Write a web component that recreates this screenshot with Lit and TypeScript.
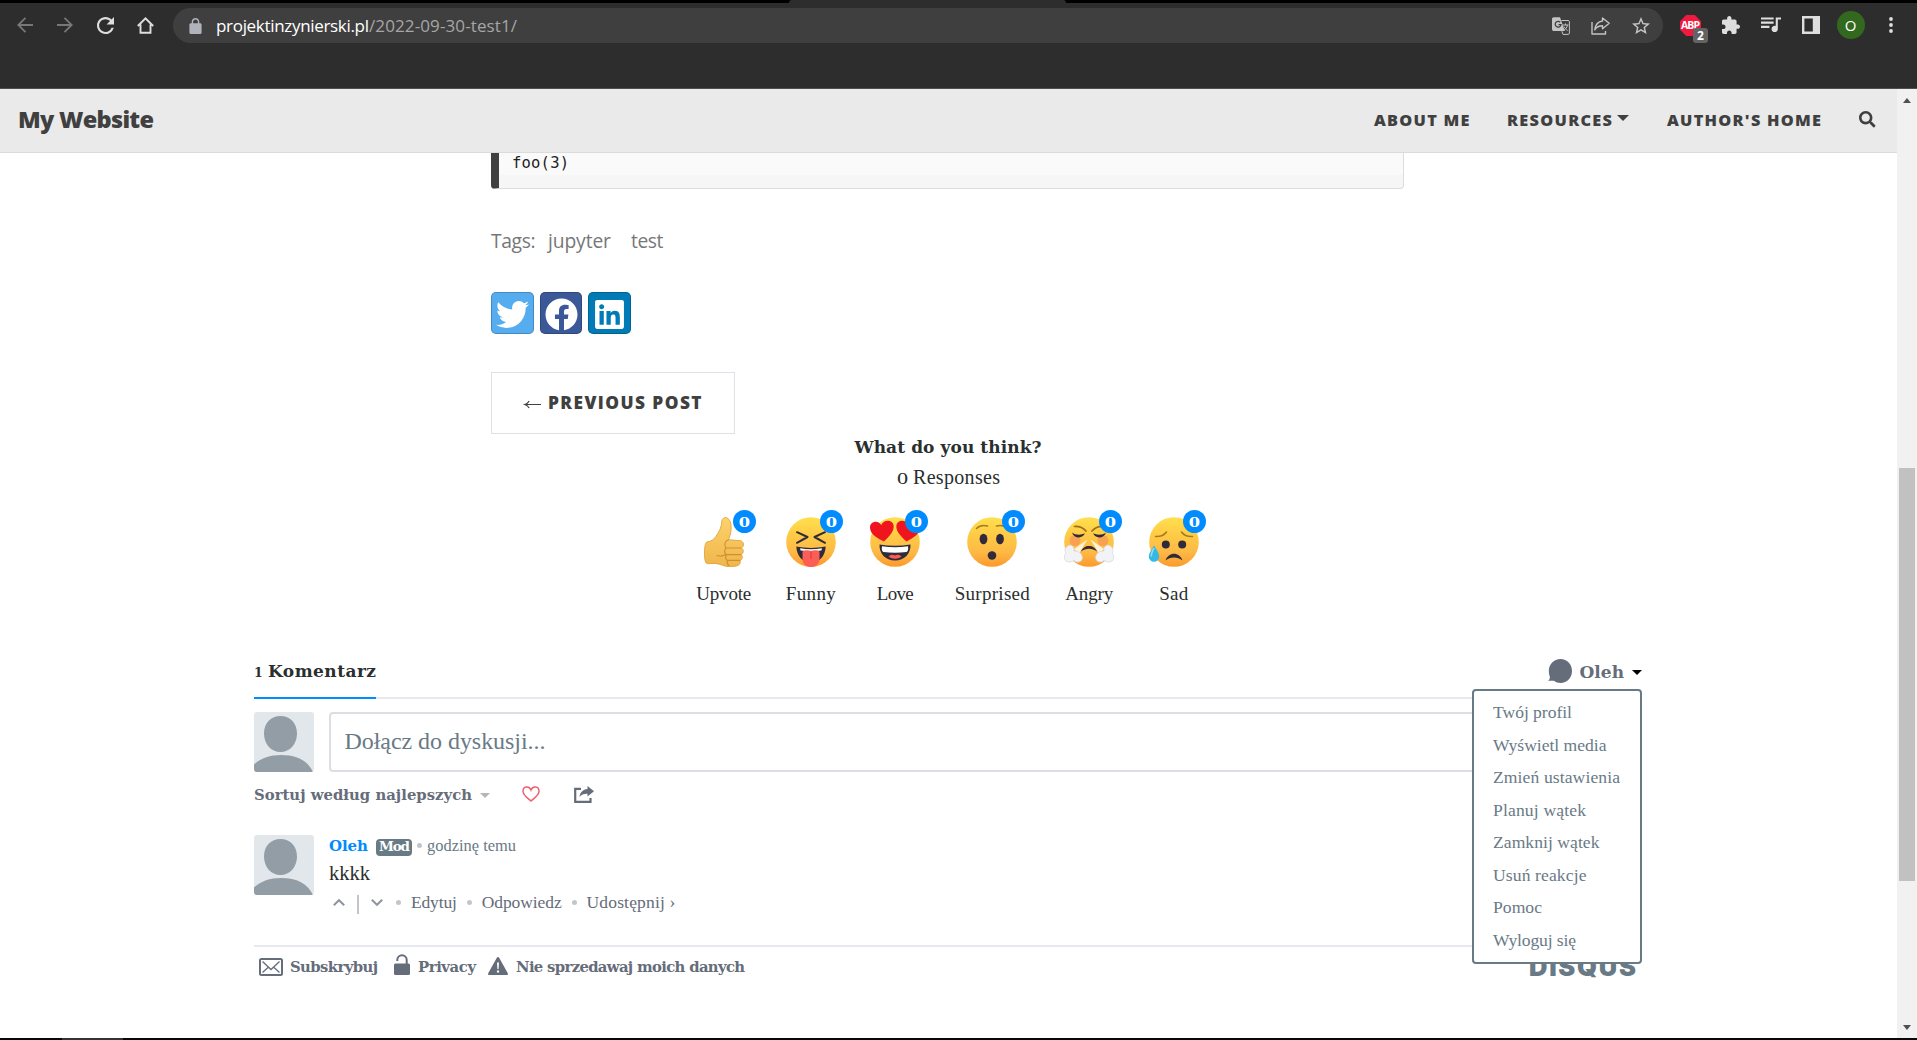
import { LitElement, html, css, svg } from "lit";
import { customElement, property } from "lit/decorators.js";
import { styleMap } from "lit/directives/style-map.js";

/** A single line of text, tracked so that it spans the given width. */
@customElement("fit-text")
class FitText extends LitElement {
  @property({ type: Number }) w = 0;
  @property() text = "";
  static styles = css`
    :host { display: inline-block; white-space: nowrap; flex: none; }
    .host { display: block; white-space: pre; }
    .line { display: inline-block; }
  `;
  firstUpdated() {
    this.fit();
    document.fonts.ready.then(() => this.fit());
  }
  fit() {
    const el = this.renderRoot.querySelector(".line") as HTMLElement;
    el.style.letterSpacing = "0px";
    const natural = el.getBoundingClientRect().width;
    const n = Array.from(this.text).length;
    el.style.letterSpacing = n > 1 ? `${(this.w - natural) / (n - 1)}px` : "0px";
  }
  render() {
    return html`<span class="host" style=${styleMap({ width: `${this.w}px` })}><span class="line">${this.text}</span></span>`;
  }
}

const t = (text: string, w: number, cls = "") => html`<fit-text class=${cls} .text=${text} .w=${w}></fit-text>`;

const gradient = (id: string) => svg`<defs><linearGradient id=${id} x1="0" y1="0" x2="0" y2="1">
  <stop offset="0" stop-color="#ffe04f"/><stop offset=".35" stop-color="#ffcb45"/><stop offset=".7" stop-color="#fdb946"/><stop offset="1" stop-color="#fc9a2b"/></linearGradient></defs>
  <circle cx="25" cy="25" r="24.8" fill="url(#${id})"/>`;

const faces: Record<string, unknown> = {
  upvote: svg`<defs><linearGradient id="th" x1="0" y1="0" x2="0" y2="1"><stop offset="0" stop-color="#fdd26b"/><stop offset="1" stop-color="#efb64c"/></linearGradient></defs>
    <g transform="translate(1.5 0)"><path d="M23 1.2c3-2 6.300 1 7.200 5 1.300 6-.2 11.500-2.200 16.500l12 1c3.500.8 4 5.500 1 7.300 2.600 1.500 2.300 5.500-.4 6.500 2 1.700 1.400 5-1 6 .8 2.500-.8 5-3.600 5.500-5 .8-11 .8-14-.8-4-2-11-2-15-1.500-2 0-3-4-3-9.500 0-6 .4-11.500 2.500-12.300 4-.3 7-2.500 9-5.500 2.500-4 4.500-7 5.300-11.200C21.300 5.500 21 2.500 23 1.200z" fill="url(#th)" stroke="#e0a33c" stroke-width=".9"/>
    <path d="M28 22.700c-3 .8-5 4.300-2.600 8.300-1.800 2.400-1.500 5 .6 6.800-1.200 2-.8 4.400.8 5.700-.4 2 .3 4.200 1.600 5M25.500 31h15M26.200 37.600h14M27.200 43.400h12M16.500 38.500c3 .8 6 .7 8.500-.7" fill="none" stroke="#cf8f30" stroke-width="1.100" stroke-linecap="round"/></g>`,
  funny: svg`${gradient("fu")}
    <path d="M11 15.200l10.500 4.800L11 25.800M39 15.200L28.500 20 39 25.800" fill="none" stroke="#302b3a" stroke-width="2" stroke-linecap="round" stroke-linejoin="round"/>
    <path d="M10.300 29.500c9 1.900 20.400 1.900 29.400 0-.5 9.500-6 16-14.700 16s-14.200-6.500-14.700-16z" fill="#302b3a"/>
    <path d="M14 31.300q11 1.700 22 0l-.6 2.200q-10.400 1.400-20.800 0z" fill="#fff"/>
    <path d="M16.500 34.500c2.500-1.600 6-1.800 8.500-.5 2.500-1.300 6-1.100 8.500.5v7.500c0 10.700-17 10.700-17 0z" fill="#fc5d55"/><path d="M25 34.500v7.500" stroke="#d83e41" stroke-width="1.200"/>`,
  love: svg`${gradient("lo")}
    <path d="M13.800 24.500C8 21.500 0 17.500 0 10.500 0 4 8.200 2.500 11.200 8 13.500 2.800 22.500 1.800 23.600 8.500c.9 6-5.500 12-9.800 16z" fill="#f0141e"/>
    <path d="M36.500 24.500c5.500-3 13.500-7 13.500-14C50 4 41.800 2.500 38.800 8 36.500 2.800 27.400 1.800 26.400 8.500c-.9 6 5.800 12 10.100 16z" fill="#f0141e"/>
    <path d="M9.500 27.500c10 1.700 21 1.700 31 0 .5 9-6 16-15.500 16s-16-7-15.500-16z" fill="#302b3a"/><path d="M12 29.200q13 1.900 26 0c.7 3.200-.5 5.600-1.500 5.800q-11.500 1.500-23 0c-1.200-.3-2.200-2.600-1.500-5.800z" fill="#fff"/>
    <path d="M18.500 39.500c2-2 4.500-2 6.500-.9 2-1.100 4.500-1.100 6.500.9-4 3-9 3-13 0z" fill="#ff5a4f"/>`,
  surprised: svg`${gradient("su")}
    <path d="M9.500 11.500c3-3 7-3.500 11-2.500M29.500 9c4-1 8-.5 11 2.500" fill="none" stroke="#a87a1e" stroke-width="1.600" stroke-linecap="round"/>
    <ellipse cx="16.500" cy="22" rx="3.900" ry="5.200" fill="#302b3a"/><ellipse cx="33" cy="22" rx="3.900" ry="5.200" fill="#302b3a"/><ellipse cx="25" cy="38.500" rx="4.300" ry="4.200" fill="#302b3a"/>`,
  angry: svg`${gradient("an")}
    <circle cx="11" cy="23.500" r="5.500" fill="#f58b5c" opacity=".6"/><circle cx="39" cy="23.500" r="5.500" fill="#f58b5c" opacity=".6"/>
    <path d="M10.500 9.500c4.500-.3 8.500 1.200 11.500 4.500M39.500 9.500c-4.500-.3-8.500 1.200-11.500 4.500" fill="none" stroke="#a06d18" stroke-width="1.700" stroke-linecap="round"/>
    <path d="M8 15.500c3 2.500 9 3 12.800.8-1.500 5.500-10.800 5.800-12.800-.8zM42 15.500c-3 2.500-9 3-12.800.8 1.500 5.500 10.800 5.800 12.800-.8z" fill="#302b3a"/>
    <path d="M23.500 22.500L10 32l5 4.500zM26.500 22.500L40 32l-5 4.500z" fill="#fff3dc"/>
    <path d="M17 34.500c2.500-7.500 13.500-7.500 16 0-5-3.600-11-3.600-16 0z" fill="#302b3a"/>
    <g fill="#f1f3f6" stroke="#d5dbe2" stroke-width=".8"><path d="M10 34c1-5-4-7.500-7-4.500-2.500 2-2.500 5-1 6.500-3 3-2 9 3 9 2 0 4-.7 5-1.500 3 3 8 1.500 8.300-2.500C18.500 36.500 14 33.500 10 34z"/><path d="M40 34c-1-5 4-7.500 7-4.500 2.500 2 2.500 5 1 6.500 3 3 2 9-3 9-2 0-4-.7-5-1.500-3 3-8 1.500-8.300-2.500-.2-4.500 4.300-7.500 8.300-7z"/></g>`,
  sad: svg`${gradient("sa")}
    <path d="M6.500 19.500c4.500.3 8.500-1.200 11-4.500M43.500 19.500c-4.500.3-8.500-1.200-11-4.500" fill="none" stroke="#a87a1e" stroke-width="1.600" stroke-linecap="round"/>
    <circle cx="16.800" cy="27.500" r="4" fill="#302b3a"/><circle cx="33.200" cy="27.500" r="4" fill="#302b3a"/>
    <path d="M16.500 43.500c3-9 14-9 17 0-5-4-12-4-17 0z" fill="#302b3a"/>
    <path d="M5 28.500c2.500 4 5.200 7.500 5.200 11a5.200 5.200 0 0 1-10.400 0c0-3.500 3-7 5.200-11z" fill="#35b8e4"/><path d="M5 31c-1.500 3-3 5.500-2.800 8.500" stroke="#8fe0f7" stroke-width="1.500" fill="none"/>`,
};

const reactions = [
  { face: "upvote", label: "Upvote", w: 55, col: 55 },
  { face: "funny", label: "Funny", w: 50, col: 50 },
  { face: "love", label: "Love", w: 37, col: 50 },
  { face: "surprised", label: "Surprised", w: 75, col: 75 },
  { face: "angry", label: "Angry", w: 48, col: 50 },
  { face: "sad", label: "Sad", w: 29, col: 50 },
];

const menu: [string, number][] = [
  ["Twój profil", 79], ["Wyświetl media", 113.500], ["Zmień ustawienia", 127], ["Planuj wątek", 93],
  ["Zamknij wątek", 106.500], ["Usuń reakcje", 93.500], ["Pomoc", 49], ["Wyloguj się", 83],
];

const icon = (w: number, h: number, box: string, body: unknown, cls = "") =>
  html`<svg class=${cls} width=${w} height=${h} viewBox=${box} fill="currentColor">${body}</svg>`;

@customElement("app-root")
class AppRoot extends LitElement {
  static styles = css`
    :host { display: block; width: 1917px; height: 1040px; overflow: hidden; background: #fff; }
    * { box-sizing: border-box; }
    svg { display: block; flex: none; overflow: visible; }
    .page { display: flex; flex-direction: column; width: 1917px; height: 1040px; font-family: "Open Sans", sans-serif; }

    .tabstrip { height: 3px; background: #000; display: flex; padding-left: 789px; }
    .tab { width: 277px; height: 3px; background: #2d2d2d; border-radius: 4px 4px 0 0; }
    .toolbar { height: 85px; background: #2d2d2d; display: flex; padding: 5px 6px 0 5px; color: #dedede; }
    .tool { width: 40px; height: 34px; display: flex; align-items: center; justify-content: center; flex: none; }
    .dim { color: #777; }
    .omnibox { width: 1490px; height: 35px; border-radius: 18px; background: #3f3f3f; margin: 0 7.500px 0 8px; display: flex; align-items: center; padding: 0 2.500px 0 16px; color: #fff; font-size: 17px; flex: none; }
    .lock { color: #b0b3bb; margin-right: 14px; }
    .path { color: #a6a6a6; }
    .grow { flex: 1; }
    .action { color: #c4c4c4; }
    .abp { position: relative; width: 21px; height: 21px; color: #f0193f; }
    .abp-label { position: absolute; left: 1px; top: 0; line-height: 21px; font-size: 10.500px; font-weight: 700; color: #fff; }
    .abp-count { position: absolute; left: 13px; top: 13px; width: 15px; height: 15px; border-radius: 3px; background: #636363; color: #fff; font-size: 12px; font-weight: 700; line-height: 15px; text-align: center; }
    .avatar { width: 28px; height: 28px; border-radius: 50%; background: #33691e; color: #fff; font-size: 15px; line-height: 28px; text-align: center; }
    .seam { height: 1px; background: #4f4f4f; }

    .viewport { display: flex; height: 949px; }
    .site { width: 1897px; height: 949px; overflow: hidden; }
    .navbar { height: 64px; background: #eaeaea; border-bottom: 1px solid #dbdbdb; display: flex; align-items: center; padding: 0 22px 2px 18px; color: #404040; font-weight: 800; font-size: 16.300px; }
    .brand { font-size: 23.500px; font-weight: 800; margin-bottom: 1px; }
    .nav { margin-right: 37.500px; }
    .caret { width: 0; height: 0; border: 6.500px solid transparent; border-top-color: #404040; border-bottom: 0; margin: 0 38px 4px 5px; }
    .author { margin-right: 37.500px; }

    .post { padding-left: 491px; }
    .code { width: 913px; height: 36px; border: 1px solid #ddd; border-top: 0; border-left: 8px solid #404040; border-radius: 0 0 4px 4px; background: linear-gradient(#fafafa 22px, #f6f6f6 22px); padding-left: 13px; line-height: 21px; font-family: "DejaVu Sans Mono", monospace; font-size: 15.500px; color: #222; }
    .tags { margin-top: 36px; height: 30px; line-height: 31px; display: flex; color: #777; font-size: 19.300px; }
    .tagword { margin-left: 12.500px; }
    .tagword + .tagword { margin-left: 20px; }
    .shares { margin-top: 37px; height: 42px; display: flex; gap: 6px; color: #fff; }
    .share { width: 42px; height: 42px; border-radius: 5px; border: 1px solid rgba(0, 0, 0, 0.2); display: flex; align-items: center; justify-content: center; padding-top: 2px; }
    .tw { width: 43px; background: #55acee; }
    .fb { background: #3b5998; }
    .li { width: 43px; background: #007bb6; }
    .prev { margin-top: 38px; width: 244px; height: 62px; border: 1px solid #dee2e6; display: flex; align-items: center; padding: 0 0 2px 32px; color: #404040; font-size: 17.300px; font-weight: 800; }
    .arrow { margin-right: 7px; margin-top: 4px; }

    .serif { font-family: "Liberation Serif", serif; color: #2a2e2e; }
    .serif .b { font-family: "DejaVu Serif", serif; font-weight: 700; }
    .poll { display: flex; flex-direction: column; align-items: center; padding-right: 1px; }
    .question { height: 26px; line-height: 27px; font-size: 17px; }
    .count { margin: 4px 0 0 1px; height: 26px; line-height: 27px; font-size: 20px; display: flex; gap: 6px; }
    .zero { width: 10px; font-size: 16.500px; line-height: 30px; transform: scaleX(1.350); transform-origin: 0 0; }
    .reactions { display: flex; gap: 34.500px; margin: 26.500px 0 0 -1px; }
    .reaction { display: flex; flex-direction: column; align-items: center; }
    .face { position: relative; width: 50px; height: 50px; }
    .badge { position: absolute; left: 34.500px; top: -7px; width: 23px; height: 23px; border-radius: 50%; background: #008bff; color: #fff; font: 700 13.500px/24px "DejaVu Serif", serif; text-align: center; }
    .digit { display: block; transform: scaleX(1.200); }
    .label { margin-top: 17.500px; height: 20px; line-height: 20px; font-size: 19px; }

    .thread { margin: 43px 0 0 254px; width: 1388px; }
    .head { height: 52px; border-bottom: 2px solid #e7e9ee; display: flex; }
    .tabname { height: 52px; line-height: 49px; border-bottom: 2px solid #008bff; font-size: 17px; width: 122px; display: flex; align-items: stretch; gap: 6px; }
    .one { font-size: 12.500px; line-height: 52px; }
    .account { position: relative; width: 94px; height: 50px; display: flex; align-items: center; color: #656c7a; font-size: 17px; }
    .bubble { margin: 0 7.500px 2px 0; }
    .tri { width: 0; height: 0; border: 5px solid transparent; border-top-color: #000; border-bottom: 0; margin-left: 8px; }
    .menu { position: absolute; z-index: 2; left: -76px; top: 42px; width: 170px; height: 275px; background: #fff; border: 2px solid #687a86; border-radius: 4px; padding: 5px 0 0 19px; display: flex; flex-direction: column; color: #687a86; font-size: 17.600px; line-height: 32.500px; }
    .composer { margin-top: 13px; display: flex; gap: 15px; }
    .field { width: 1313px; height: 60px; border: 2px solid #dbdfe4; border-radius: 4px; padding-left: 13.500px; line-height: 54px; font-size: 24px; color: #687a86; }
    .pic { border-radius: 3px; overflow: hidden; }
    .sort { margin-top: 8px; height: 30px; padding-bottom: 2px; display: flex; align-items: center; color: #656c7a; font-size: 14.800px; }
    .sortcaret { width: 0; height: 0; border: 5px solid transparent; border-top-color: #b4b6ba; border-bottom: 0; margin: 2px 32px 0 8px; }
    .heart { color: #f05f70; margin-right: 34px; }
    .comment { margin-top: 25px; height: 110px; display: flex; gap: 15px; }
    .meta { height: 21px; display: flex; align-items: center; font-size: 16.400px; color: #687a86; }
    .name { color: #008bff; font-size: 15px; }
    .mod { margin: 4px 5px 0 8px; width: 36px; height: 17px; border-radius: 4px; background: #687a86; color: #fff; font-size: 13.500px; line-height: 15px; padding-left: 3px; }
    .dot { width: 5px; height: 5px; border-radius: 50%; background: #c2c6cc; flex: none; }
    .when { margin-left: 5px; }
    .body { margin-top: 5px; height: 25px; line-height: 24px; font-size: 20.500px; }
    .actions { margin-top: 6px; height: 21px; display: flex; align-items: center; color: #656c7a; font-size: 17.500px; padding-left: 4px; }
    .bar { width: 2px; height: 19px; background: #c2c6cc; margin: 4px 12px 0 12px; }
    .chev { color: #8f959f; }
    .gap { margin: 0 9.900px; }
    .first { margin-left: 13px; }
    .foot { border-top: 2px solid #e7e9ee; padding: 8px 0 0 5px; height: 60px; display: flex; color: #656c7a; font-size: 14.800px; }
    .footrow { height: 23px; display: flex; align-items: center; flex: 1; }
    .envelope { margin-right: 7px; }
    .padlock { margin: 0 8px 3px 16px; }
    .warning { margin: 0 8px 2px 12px; }
    .disqus { font-family: Inter, sans-serif; font-weight: 900; font-size: 25.500px; color: #687a86; line-height: 24px; margin-right: 6px; }

    .scroll { width: 20px; height: 949px; background: #f1f1f1; display: flex; flex-direction: column; align-items: center; padding-right: 1px; }
    .up { width: 0; height: 0; border: 4px solid transparent; border-bottom: 5px solid #505050; border-top: 0; margin-top: 9px; }
    .thumb { width: 16px; height: 413px; background: #c1c1c1; margin-top: 365px; }
    .down { width: 0; height: 0; border: 4px solid transparent; border-top: 5px solid #505050; border-bottom: 0; margin-top: 144px; }
    .taskbar { height: 2px; background: #08070b; padding-left: 62px; }
    .active { width: 61px; height: 2px; background: #333; }
  `;

  pic() {
    return icon(60, 60, "0 0 60 60", svg`<rect width="60" height="60" fill="#e1e7ea"/><path fill="#939da6" d="M26.500 4C36 4 43 11 43 21.500 43 32 36 40 26.500 40S10 32 10 21.500C10 11 17 4 26.500 4zM0 52.500C7 46 16 43 27 43c16 0 26.500 5.500 32 17H0z"/>`, "pic");
  }

  chrome() {
    return html`
      <div class="tabstrip"><div class="tab"></div></div>
      <div class="toolbar">
        <div class="tool dim">${icon(16, 16, "0 0 16 16", svg`<path d="M16 8H1.500M8.500 .8L1.300 8l7.200 7.200" fill="none" stroke="currentColor" stroke-width="1.800"/>`)}</div>
        <div class="tool dim">${icon(16, 16, "0 0 16 16", svg`<path d="M0 8h14.500M7.500 .8L14.700 8l-7.200 7.200" fill="none" stroke="currentColor" stroke-width="1.800"/>`)}</div>
        <div class="tool">${icon(17, 17, "4 4 16 16", svg`<path d="M17.650 6.350C16.200 4.900 14.210 4 12 4c-4.420 0-7.990 3.580-7.990 8s3.570 8 7.990 8c3.730 0 6.840-2.550 7.730-6h-2.080c-.82 2.330-3.040 4-5.650 4-3.310 0-6-2.690-6-6s2.690-6 6-6c1.660 0 3.140.69 4.220 1.780L13 11h7V4l-2.350 2.350z"/>`)}</div>
        <div class="tool">${icon(17, 17, "0 0 17 17", svg`<path d="M.8 9L8.500 1.300 16.200 9M3.500 7.500v8.300h10V7.500" fill="none" stroke="currentColor" stroke-width="1.900"/>`)}</div>
        <div class="omnibox">
          ${icon(13, 16, "4 1 16 21", svg`<path d="M18 8h-1V6c0-2.760-2.240-5-5-5S7 3.240 7 6v2H6c-1.100 0-2 .9-2 2v10c0 1.100.9 2 2 2h12c1.100 0 2-.9 2-2V10c0-1.100-.9-2-2-2zM15.100 8H8.900V6c0-1.710 1.390-3.100 3.100-3.100s3.100 1.390 3.100 3.100v2z"/>`, "lock")}
          ${t("projektinzynierski.pl", 153)}${t("/2022-09-30-test1/", 148, "path")}
          <div class="grow"></div>
          <div class="tool action">${icon(18, 18, "0 0 18 18", svg`<path d="M2 .3h6L12.800 14H2C.8 14 0 13.200 0 12.200V2C0 1 .8.300 2 .300z"/><path d="M9.500 3.500h6.700c.7 0 1.200.5 1.200 1.200v11.500c0 .7-.5 1.200-1.200 1.200H11L9.800 14.200" fill="none" stroke="currentColor" stroke-width="1"/><path d="M10.500 8h6M13.500 6.500V8M15.500 8c-.5 2.500-2 4.300-4 5.500M12 9.500c.7 1.600 2 3 3.700 4" fill="none" stroke="currentColor" stroke-width="1"/><path d="M8.200 5.200A2.900 2.900 0 1 0 9 7.600H6.500" fill="none" stroke="#3f3f3f" stroke-width="1.300"/>`)}</div>
          <div class="tool action">${icon(19, 18, "0 0 19 18", svg`<path d="M1 5v12h13.500v-3M11.500 1l6.700 5.300-6.700 5.400V8.800C8 8.800 5.500 10 3.800 12.800 4.300 8.500 6.800 4.500 11.500 4z" fill="none" stroke="currentColor" stroke-width="1.400" stroke-linejoin="round"/>`)}</div>
          <div class="tool action">${icon(18, 17.100, "2 2 20 19", svg`<path d="M22 9.240l-7.190-.62L12 2 9.190 8.630 2 9.240l5.460 4.730L5.820 21 12 17.270 18.180 21l-1.630-7.030L22 9.240zM12 15.400l-3.760 2.270 1-4.280-3.320-2.880 4.380-.38L12 6.100l1.710 4.040 4.380.38-3.320 2.880 1 4.280L12 15.400z"/>`)}</div>
        </div>
        <div class="tool"><div class="abp">${icon(21, 21, "0 0 21 21", svg`<path d="M6.200 0h8.600L21 6.200v8.600L14.800 21H6.200L0 14.800V6.200z"/>`)}${t("ABP", 19, "abp-label")}<span class="abp-count">2</span></div></div>
        <div class="tool">${icon(18, 18, "2 1 21 21", svg`<path d="M20.500 11H19V7c0-1.100-.9-2-2-2h-4V3.500C13 2.120 11.880 1 10.500 1S8 2.120 8 3.500V5H4c-1.100 0-1.990.9-1.990 2v3.800H3.500c1.490 0 2.700 1.210 2.700 2.700s-1.210 2.700-2.700 2.700H2V20c0 1.100.9 2 2 2h3.800v-1.500c0-1.490 1.210-2.700 2.700-2.700 1.490 0 2.700 1.210 2.700 2.700V22H17c1.100 0 2-.9 2-2v-4h1.500c1.380 0 2.500-1.120 2.500-2.500S21.880 11 20.500 11z"/>`)}</div>
        <div class="tool">${icon(20, 15.500, "3 6 19 14", svg`<path d="M15 6H3v2h12V6zm0 4H3v2h12v-2zM3 16h8v-2H3v2zM17 6v8.180c-.31-.11-.65-.18-1-.18-1.660 0-3 1.340-3 3s1.340 3 3 3 3-1.340 3-3V8h3V6h-5z"/>`)}</div>
        <div class="tool">${icon(18, 18, "0 0 18 18", svg`<path fill-rule="evenodd" d="M0 0h18v18H0zM2.400 2.400v13.200h8.400V2.400z"/>`)}</div>
        <div class="tool"><div class="avatar">O</div></div>
        <div class="tool">${icon(4, 16, "0 0 4 16", svg`<circle cx="2" cy="2" r="1.900"/><circle cx="2" cy="8" r="1.900"/><circle cx="2" cy="14" r="1.900"/>`)}</div>
      </div>
      <div class="seam"></div>`;
  }

  post() {
    return html`<div class="post">
      <div class="code">${t("foo(3)", 57)}</div>
      <div class="tags">${t("Tags:", 44.500)}${t("jupyter", 63, "tagword")}${t("test", 32.500, "tagword")}</div>
      <div class="shares">
        <div class="share tw">${icon(33, 33, "0 0 512 512", svg`<path d="M459.370 151.716c.325 4.548.325 9.097.325 13.645 0 138.720-105.583 298.558-298.558 298.558-59.452 0-114.680-17.219-161.137-47.106 8.447.974 16.568 1.299 25.340 1.299 49.055 0 94.213-16.568 130.274-44.832-46.132-.975-84.792-31.188-98.112-72.772 6.498.974 12.995 1.624 19.818 1.624 9.421 0 18.843-1.300 27.614-3.573-48.081-9.747-84.143-51.980-84.143-102.985v-1.299c13.969 7.797 30.214 12.670 47.431 13.319-28.264-18.843-46.781-51.005-46.781-87.391 0-19.492 5.197-37.360 14.294-52.954 51.655 63.675 129.300 105.258 216.365 109.807-1.624-7.797-2.599-15.918-2.599-24.040 0-57.828 46.782-104.934 104.934-104.934 30.213 0 57.502 12.670 76.670 33.137 23.715-4.548 46.456-13.320 66.599-25.340-7.798 24.366-24.366 44.833-46.132 57.827 21.117-2.273 41.584-8.122 60.426-16.243-14.292 20.791-32.161 39.308-52.628 54.253z"/>`)}</div>
        <div class="share fb">${icon(33, 33, "0 0 512 512", svg`<path d="M504 256C504 119 393 8 256 8S8 119 8 256c0 123.780 90.690 226.380 209.250 245V327.690h-63V256h63v-54.640c0-62.150 37-96.480 93.670-96.480 27.140 0 55.520 4.840 55.520 4.840v61h-31.280c-30.800 0-40.410 19.120-40.410 38.730V256h68.780l-11 71.690h-57.780V501C413.310 482.380 504 379.780 504 256z"/>`)}</div>
        <div class="share li">${icon(29, 33, "0 0 448 512", svg`<path d="M416 32H31.900C14.300 32 0 46.500 0 64.300v383.400C0 465.500 14.300 480 31.900 480H416c17.600 0 32-14.500 32-32.300V64.300c0-17.800-14.400-32.300-32-32.300zM135.400 416H69V202.200h66.500V416zm-33.200-243c-21.300 0-38.500-17.300-38.500-38.500S80.900 96 102.200 96c21.200 0 38.500 17.300 38.500 38.500 0 21.300-17.200 38.500-38.500 38.500zm282.100 243h-66.400V312c0-24.800-.5-56.700-34.500-56.700-34.600 0-39.900 27-39.900 54.900V416h-66.400V202.200h63.700v29.200h.9c8.900-16.800 30.600-34.500 62.900-34.500 67.200 0 79.700 44.300 79.700 101.900V416z"/>`)}</div>
      </div>
      <div class="prev">${icon(17, 9, "0 0 17 9", svg`<path d="M17 4.500H1.500M5.200 1Q3.700 3.600.8 4.500 3.700 5.400 5.200 8" fill="none" stroke="currentColor" stroke-width="1.200"/>`, "arrow")}${t("PREVIOUS POST", 153.500)}</div>
    </div>`;
  }

  poll() {
    return html`<div class="poll serif">
      <div class="question b">${t("What do you think?", 187)}</div>
      <div class="count"><span class="zero">${t("0", 10)}</span>${t("Responses", 87)}</div>
      <div class="reactions">${reactions.map((r) => html`
        <div class="reaction" style=${styleMap({ width: `${r.col}px` })}>
          <div class="face">${icon(50, 50, "0 0 50 50", faces[r.face])}<span class="badge"><span class="digit">0</span></span></div>
          <div class="label">${t(r.label, r.w)}</div>
        </div>`)}
      </div>
    </div>`;
  }

  thread() {
    return html`<div class="thread serif">
      <div class="head">
        <div class="tabname b"><span class="one">${t("1", 8)}</span>${t("Komentarz", 108)}</div>
        <div class="grow"></div>
        <div class="account">
          ${icon(24, 24, "0 0 24 24", svg`<path d="M12.500 0C19 0 24 5.200 24 12s-5 12-11.500 12c-2.500 0-4.600-.8-6.500-2.200H0c1.500-1 2-2.500 1.800-4C1.200 16 .8 14 .8 12 .8 5.200 6 0 12.500 0z"/>`, "bubble")}
          <span class="b">${t("Oleh", 44.500)}</span><div class="tri"></div>
          <div class="menu">${menu.map(([label, w]) => t(label, w))}</div>
        </div>
      </div>
      <div class="composer">${this.pic()}<div class="field">${t("Dołącz do dyskusji...", 201)}</div></div>
      <div class="sort"><span class="b">${t("Sortuj według najlepszych", 218)}</span><div class="sortcaret"></div>
        ${icon(18, 16, "0 0 18 16", svg`<path d="M9 15C5.500 12 1 9 1 5.200 1 .5 7 -.6 9 4c2-4.600 8-3.500 8 1.200C17 9 12.500 12 9 15z" fill="none" stroke="currentColor" stroke-width="1.500"/>`, "heart")}
        ${icon(20, 17, "0 0 20 17", svg`<path d="M7 2.900H1.200v12.900h15.300V12" fill="none" stroke="currentColor" stroke-width="2.200"/><path d="M13.500 0L20 5.300l-6.500 5.200V7.800C10 7.600 7.500 8.500 5.500 11 6 6.500 9 3.500 13.500 3.100z"/>`)}
      </div>
      <div class="comment">${this.pic()}
        <div>
          <div class="meta"><span class="b name">${t("Oleh", 39)}</span><span class="b mod">${t("Mod", 31)}</span><div class="dot"></div>${t("godzinę temu", 89, "when")}</div>
          <div class="body">${t("kkkk", 41)}</div>
          <div class="actions">
            ${icon(12, 7, "0 0 12 7", svg`<path d="M.8 6.300L6 1.200l5.200 5.100" fill="none" stroke="currentColor" stroke-width="2"/>`, "chev")}
            <div class="bar"></div>
            ${icon(12, 7, "0 0 12 7", svg`<path d="M.8 .7L6 5.800 11.200.7" fill="none" stroke="currentColor" stroke-width="2"/>`, "chev")}
            <div class="dot gap first"></div>${t("Edytuj", 46)}
            <div class="dot gap"></div>${t("Odpowiedz", 80)}
            <div class="dot gap"></div>${t("Udostępnij ›", 89)}
          </div>
        </div>
      </div>
      <div class="foot"><div class="footrow b">
        ${icon(24, 18, "0 0 24 18", svg`<rect x="1" y="1" width="22" height="16" rx="1.500" fill="none" stroke="currentColor" stroke-width="2"/><path d="M3.500 3.500l8.500 8 8.500-8M3.500 14.500l5.500-5M20.500 14.500l-5.500-5" fill="none" stroke="currentColor" stroke-width="1.300"/>`, "envelope")}
        ${t("Subskrybuj", 88)}
        ${icon(16, 20, "0 0 16 20", svg`<rect y="8.500" width="16" height="11.500" rx="1.500"/><path d="M3.300 6V5a4.700 4.700 0 0 1 9.400 0v4" fill="none" stroke="currentColor" stroke-width="2"/>`, "padlock")}
        ${t("Privacy", 58)}
        ${icon(20, 18, "0 0 20 18", svg`<path fill-rule="evenodd" d="M10 0c.6 0 1 .4 1.300.9l8.500 15.300c.5 1-.1 1.800-1.200 1.800H1.400C.3 18-.3 17.200.2 16.200L8.700.9C9 .4 9.400 0 10 0zM9 5.500l.4 6.500h1.200l.4-6.500zM10 13.300a1.200 1.200 0 1 0 0 2.400 1.200 1.200 0 0 0 0-2.400z"/>`, "warning")}
        ${t("Nie sprzedawaj moich danych", 229)}
        </div>${t("DISQUS", 107, "disqus")}
      </div>
    </div>`;
  }

  render() {
    return html`<div class="page">
      ${this.chrome()}
      <div class="viewport">
        <div class="site">
          <div class="navbar">${t("My Website", 136, "brand")}<div class="grow"></div>
            ${t("ABOUT ME", 95.500, "nav")}${t("RESOURCES", 105)}<div class="caret"></div>${t("AUTHOR'S HOME", 154, "author")}
            ${icon(16.500, 16.500, "0 0 512 512", svg`<path d="M505 442.700L405.300 343c-4.500-4.500-10.600-7-17-7H372c27.600-35.300 44-79.700 44-128C416 93.100 322.900 0 208 0S0 93.100 0 208s93.100 208 208 208c48.300 0 92.700-16.400 128-44v16.300c0 6.400 2.500 12.500 7 17l99.700 99.700c9.400 9.400 24.600 9.400 33.900 0l28.300-28.300c9.400-9.400 9.400-24.600.1-34zM208 336c-70.700 0-128-57.200-128-128 0-70.700 57.200-128 128-128 70.700 0 128 57.200 128 128 0 70.700-57.200 128-128 128z"/>`)}
          </div>
          ${this.post()}${this.poll()}${this.thread()}
        </div>
        <div class="scroll"><div class="up"></div><div class="thumb"></div><div class="down"></div></div>
      </div>
      <div class="taskbar"><div class="active"></div></div>
    </div>`;
  }
}
